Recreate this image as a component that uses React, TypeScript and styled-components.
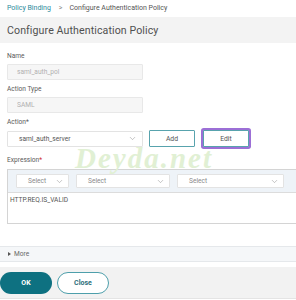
import styled, {createGlobalStyle} from 'styled-components';
import {ChevronDown} from 'lucide-react';

const GlobalStyle = createGlobalStyle`
    html, body {
        margin: 0;
        padding: 0;
        background: #fff;
        font-family: Roboto, "Liberation Sans", Arial, sans-serif;
        overflow: hidden;
    }
`;

const App = () => {
    return (
        <StyledPage>
            <GlobalStyle />
            <StyledBreadcrumb>
                <a>Policy Binding</a>
                <StyledCrumbSep>&gt;</StyledCrumbSep>
                <span>Configure Authentication Policy</span>
            </StyledBreadcrumb>
            <StyledHeader>Configure Authentication Policy</StyledHeader>

            <StyledForm>
                <StyledField>
                    <StyledLabel>Name</StyledLabel>
                    <StyledInput disabled value="saml_auth_pol" readOnly />
                </StyledField>
                <StyledField>
                    <StyledLabel>Action Type</StyledLabel>
                    <StyledInput disabled value="SAML" readOnly />
                </StyledField>
                <StyledField>
                    <StyledLabel>Action*</StyledLabel>
                    <StyledActionRow>
                        <StyledSelect $width={136}>
                            <span>saml_auth_server</span>
                            <ChevronDown size={9} strokeWidth={1.5} />
                        </StyledSelect>
                        <StyledButton>Add</StyledButton>
                        <StyledButton $focused>Edit</StyledButton>
                    </StyledActionRow>
                </StyledField>
                <StyledField $gap={4}>
                    <StyledLabel>Expression<StyledRequired>*</StyledRequired></StyledLabel>
                </StyledField>
            </StyledForm>

            <StyledExpression>
                <StyledToolbar>
                    <StyledSelect $width={53} $small>
                        <span>Select</span>
                        <ChevronDown size={9} strokeWidth={1.5} />
                    </StyledSelect>
                    <StyledSelect $width={94} $small>
                        <span>Select</span>
                        <ChevronDown size={9} strokeWidth={1.5} />
                    </StyledSelect>
                    <StyledSelect $width={107} $small>
                        <span>Select</span>
                        <ChevronDown size={9} strokeWidth={1.5} />
                    </StyledSelect>
                </StyledToolbar>
                <StyledExprText>HTTP.REQ.IS_VALID</StyledExprText>
            </StyledExpression>

            <StyledMore>
                <StyledTriangle />
                More
            </StyledMore>

            <StyledFooter>
                <StyledPrimary>OK</StyledPrimary>
                <StyledSecondary>Close</StyledSecondary>
            </StyledFooter>

            <StyledWatermark>Deyda.net</StyledWatermark>
        </StyledPage>
    );
};

export default App;

const StyledPage = styled.div`
    position: relative;
    width: 296px;
    height: 300px;
    overflow: hidden;
`;

const StyledBreadcrumb = styled.div`
    display: flex;
    align-items: center;
    height: 15px;
    padding: 0 7px;
    font-size: 7px;
    color: #555;

    a {
        color: #2b8a9c;
    }
`;

const StyledCrumbSep = styled.span`
    margin: 0 7px 0 8px;
    color: #888;
`;

const StyledHeader = styled.div`
    display: flex;
    align-items: center;
    height: 26px;
    margin-top: 2px;
    padding: 0 7px;
    background: #f3f3f3;
    font-size: 10.6px;
    color: #505050;
    letter-spacing: 0.1px;
`;

const StyledForm = styled.div`
    display: flex;
    flex-direction: column;
    gap: 4px;
    padding: 8px 7px 0;
`;

const StyledField = styled.div<{$gap?: number}>`
    display: flex;
    flex-direction: column;
    gap: 3px;
    margin-top: ${(p) => p.$gap ?? 0}px;
`;

const StyledLabel = styled.label`
    height: 10px;
    line-height: 10px;
    font-size: 6.6px;
    color: #5a5a5a;
`;

const StyledRequired = styled.span`
    color: #d0282e;
`;

const StyledInput = styled.input`
    width: 136px;
    height: 16px;
    box-sizing: border-box;
    padding: 0 9px;
    border: 1px solid #e8e8e8;
    border-radius: 1px;
    background: #f6f6f6;
    font-family: inherit;
    font-size: 6.6px;
    color: #b0b0b0;
    outline: none;
`;

const StyledActionRow = styled.div`
    display: flex;
    align-items: center;
    gap: 6px;
    height: 17px;
`;

const StyledSelect = styled.div<{$width: number; $small?: boolean}>`
    display: flex;
    align-items: center;
    justify-content: space-between;
    width: ${(p) => p.$width}px;
    height: ${(p) => (p.$small ? 14 : 16)}px;
    box-sizing: border-box;
    padding: ${(p) => (p.$small ? '0 4px 0 11px' : '0 5px 0 11px')};
    border: 1px solid #e3e3e3;
    border-radius: 1px;
    background: #fff;
    font-size: 6.6px;
    color: ${(p) => (p.$small ? '#8a8a8a' : '#555')};

    svg {
        color: #999;
    }
`;

const StyledButton = styled.button<{$focused?: boolean}>`
    width: 46px;
    height: 17px;
    margin-left: ${(p) => (p.$focused ? 2 : 0)}px;
    padding: 0;
    border: 1px solid #58a3ad;
    border-radius: 1px;
    background: #fff;
    font-family: inherit;
    font-size: 6.8px;
    color: #555;
    box-shadow: ${(p) => (p.$focused ? '0 0 0 2px #9c6fd6' : 'none')};
`;

const StyledExpression = styled.div`
    display: flex;
    flex-direction: column;
    width: 300px;
    height: 55px;
    margin: 4px 0 0 7px;
    box-sizing: border-box;
    border: 1px solid #d4d4d4;
    border-right: none;
`;

const StyledToolbar = styled.div`
    display: flex;
    align-items: center;
    gap: 7px;
    height: 22px;
    padding: 0 8px;
    border-bottom: 1px solid #dcdcdc;
    background: #eef3f8;
`;

const StyledExprText = styled.div`
    padding: 3px 2px;
    font-size: 6.6px;
    color: #555;
`;

const StyledMore = styled.div`
    display: flex;
    align-items: center;
    gap: 3px;
    height: 14px;
    margin-top: 22px;
    padding: 0 8px;
    border-top: 1px solid #e5e8eb;
    border-bottom: 1px solid #e5e8eb;
    background: #f5f7f9;
    font-size: 6.6px;
    color: #666;
`;

const StyledTriangle = styled.span`
    width: 0;
    height: 0;
    border-top: 2px solid transparent;
    border-bottom: 2px solid transparent;
    border-left: 3px solid #555;
`;

const StyledFooter = styled.div`
    display: flex;
    align-items: center;
    gap: 5px;
    height: 31px;
    margin-top: 5px;
    border-bottom: 1px solid #e4e4e4;
    background: #f2f2f2;
`;

const StyledPrimary = styled.button`
    width: 52px;
    height: 22px;
    padding: 0;
    border: none;
    border-radius: 11px;
    background: #0e7181;
    font-family: inherit;
    font-size: 7px;
    font-weight: 700;
    color: #fff;
`;

const StyledSecondary = styled.button`
    width: 52px;
    height: 22px;
    padding: 0;
    border: 1px solid #4e9fab;
    border-radius: 11px;
    background: #fff;
    font-family: inherit;
    font-size: 7px;
    font-weight: 700;
    color: #2e6f7b;
`;

const StyledWatermark = styled.div`
    position: absolute;
    left: 75px;
    top: 147px;
    height: 22px;
    line-height: 22px;
    font-family: "Liberation Serif", serif;
    font-style: italic;
    font-weight: 700;
    font-size: 29px;
    letter-spacing: 2px;
    color: #e1f0d4;
    pointer-events: none;
`;
